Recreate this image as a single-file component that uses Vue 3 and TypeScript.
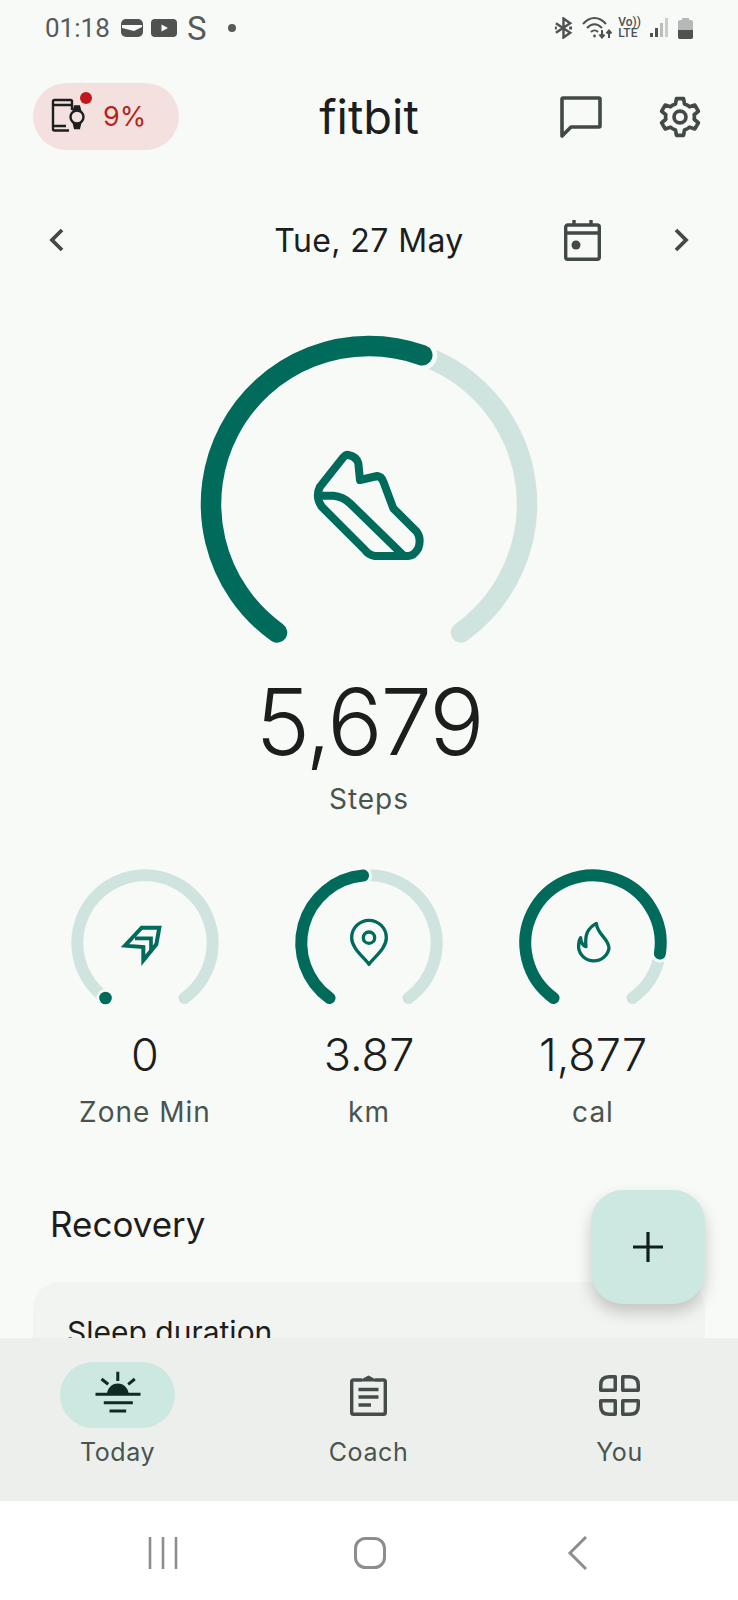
<script setup lang="ts">
const polar = (c: number, r: number, deg: number) => {
  const rad = (deg * Math.PI) / 180
  return `${(c + r * Math.sin(rad)).toFixed(2)} ${(c - r * Math.cos(rad)).toFixed(2)}`
}

const arc = (c: number, r: number, from: number, to: number) => {
  const large = to - from > 180 ? 1 : 0
  return `M${polar(c, r, from)} A${r} ${r} 0 ${large} 1 ${polar(c, r, to)}`
}

const START = -144.4
const END = 144.4

const stats = [
  { key: 'zone', value: '0', label: 'Zone Min', done: null },
  { key: 'km', value: '3.87', label: 'km', done: -5 },
  { key: 'cal', value: '1,877', label: 'cal', done: 99 },
]
</script>

<template>
  <div class="phone">
    <div class="status-bar">
      <span class="time">01:18</span>
      <svg width="22" height="18" viewBox="0 0 22 18">
        <rect width="22" height="18" rx="5" fill="#4e5250" />
        <path d="M1 6 H21 V8 L13 12 L1 9 Z" fill="#f8faf8" />
      </svg>
      <svg class="st-yt" width="26" height="18" viewBox="0 0 26 18">
        <rect width="26" height="18" rx="4" fill="#4e5250" />
        <path d="M10.500 5.500 L17 9 L10.500 12.500 Z" fill="#f8faf8" />
      </svg>
      <span class="st-s">S</span>
      <span class="st-dot"></span>
      <div class="st-right">
        <svg width="19" height="22" viewBox="0 0 20 22" fill="none" stroke="#4e5250" stroke-width="2.600">
          <path d="M2 6 L17 16 L10 21 V1 L17 6 L2 16" />
          <path d="M1 11 H3 M16 11 H19" stroke-width="3" />
        </svg>
        <svg class="st-wifi" width="30" height="22" viewBox="0 0 30 22" fill="none" stroke="#4e5250" stroke-width="2">
          <path d="M1 7 C8 -1 17 -1 24 7" />
          <path d="M5 11 C10 6 15 6 20 11" />
          <path d="M9 15 C11 13 14 13 16 15" />
          <circle cx="12.500" cy="19" r="1.400" fill="#4e5250" stroke="none" />
          <path d="M20 13 V20 M17.500 17.500 L20 20.500 L22.500 17.500 M27 21 V14 M24.500 16.500 L27 13.500 L29.500 16.500" />
        </svg>
        <div class="st-volte"><span>Vo))</span><span>LTE</span></div>
        <svg class="st-signal" width="18" height="20" viewBox="0 0 18 20">
          <rect x="0" y="15" width="3" height="4" fill="#4e5250" />
          <rect x="5" y="10" width="3" height="9" fill="#4e5250" />
          <rect x="10" y="5" width="3" height="14" fill="#b9bdbb" />
          <rect x="15" y="0" width="3" height="19" fill="#c9cdcb" />
        </svg>
        <svg class="st-battery" width="15" height="21" viewBox="0 0 15 21">
          <path d="M4 0 H11 V2 H13 Q15 2 15 4 V19 Q15 21 13 21 H2 Q0 21 0 19 V4 Q0 2 2 2 H4 Z" fill="#b4b8b6" />
          <path d="M0 12 H15 V19 Q15 21 13 21 H2 Q0 21 0 19 Z" fill="#4e5250" />
        </svg>
      </div>
    </div>

    <main class="main">
      <header class="header">
        <div class="battery-pill">
          <svg class="watch-icon" width="40" height="42" viewBox="0 0 40 42" fill="none" stroke="#1d1f1e" stroke-width="2.400">
            <path d="M21 14 V5.500 Q21 4 19.500 4 H3.500 Q2 4 2 5.500 V33 Q2 34.500 3.500 34.500 H18 M2 9 H21 M2 30 H15" />
            <circle cx="26" cy="21" r="6.500" />
            <path d="M23 14 L24 10.500 H28 L29 14 Z M23 28 L24 32 H28 L29 28 Z" fill="#1d1f1e" />
          </svg>
          <span class="pill-dot"></span>
          <span class="pill-text">9%</span>
        </div>
        <h1 class="logo">fitbit</h1>
        <div class="header-actions">
          <svg width="42" height="42" viewBox="0 0 42 42" fill="none" stroke="#424a47" stroke-width="3.600" stroke-linejoin="round">
            <path d="M2 40 V3 Q2 2 3 2 H39 Q40 2 40 3 V30 Q40 31 39 31 H11 Z" />
          </svg>
          <svg width="42" height="42" viewBox="0 0 24 24" fill="none" stroke="#424a47" stroke-width="2.100" stroke-linejoin="round">
            <path d="M10 1.500 H14 L14.600 4.600 Q16.300 5.200 17.500 6.200 L20.500 5.200 L22.500 8.700 L20.100 10.700 Q20.400 12 20.100 13.300 L22.500 15.300 L20.500 18.800 L17.500 17.800 Q16.300 18.800 14.600 19.400 L14 22.500 H10 L9.400 19.400 Q7.700 18.800 6.500 17.800 L3.500 18.800 L1.500 15.300 L3.900 13.300 Q3.600 12 3.900 10.700 L1.500 8.700 L3.500 5.200 L6.500 6.200 Q7.700 5.200 9.400 4.600 Z" />
            <circle cx="12" cy="12" r="3.400" />
          </svg>
        </div>
      </header>

      <div class="date-row">
        <svg width="15" height="24" viewBox="0 0 15 24" fill="none" stroke="#424a47" stroke-width="3.800">
          <path d="M13 2 L3 12 L13 22" />
        </svg>
        <span class="date">Tue, 27 May</span>
        <div class="date-actions">
          <svg width="37" height="41" viewBox="0 0 37 41" fill="none" stroke="#424a47" stroke-width="3.400">
            <rect x="1.700" y="5" width="33.600" height="34.300" rx="2" />
            <path d="M1.700 13 H35.300 M10 0 V5 M27 0 V5" />
            <circle cx="12" cy="25" r="4.500" fill="#424a47" stroke="none" />
          </svg>
          <svg width="15" height="24" viewBox="0 0 15 24" fill="none" stroke="#424a47" stroke-width="3.800">
            <path d="M2 2 L12 12 L2 22" />
          </svg>
        </div>
      </div>

      <svg class="steps-gauge" width="340" height="312" viewBox="0 0 340 312" fill="none">
        <path :d="arc(170, 158, 20, END)" class="track" stroke-width="20.500" />
        <path :d="arc(170, 158, START, 19.700)" class="halo" stroke-width="30" />
        <path :d="arc(170, 158, START, 19.700)" class="fill" stroke-width="20.500" />
        <g transform="translate(91 96) scale(.3333)" stroke="#006a5b" stroke-width="24" stroke-linejoin="round" fill="none">
          <path d="M175 75 Q200 80 205 100 L210 150 L262 138 Q275 140 280 155 L310 235 L380 305 Q395 325 385 355 Q372 378 355 378 H255 Q235 375 225 360 L95 230 Q75 200 90 170 L160 82 Q168 73 175 75 Z" />
          <path d="M85 197 H130 Q160 200 180 220 L340 376" />
        </g>
      </svg>

      <div class="steps-value">5,679</div>
      <div class="steps-label">Steps</div>

      <section class="stats">
        <div v-for="s in stats" :key="s.key" class="stat">
          <svg width="160" height="145" viewBox="0 0 160 145" fill="none">
            <path :d="arc(80, 67.7, s.done ?? START, END)" class="track" stroke-width="12" />
            <template v-if="s.done !== null">
              <path :d="arc(80, 67.7, START, s.done)" class="halo" stroke-width="18" />
              <path :d="arc(80, 67.7, START, s.done)" class="fill" stroke-width="12" />
            </template>
            <template v-else>
              <circle cx="40.500" cy="135" r="9" fill="#f8faf8" />
              <circle cx="40.500" cy="135" r="6.300" fill="#006a5b" />
            </template>
            <g v-if="s.key === 'zone'" transform="translate(50 52) scale(.3333)" stroke="#006a5b" fill="none">
              <path d="M30 92 L80 38 H133 L124 88 L85 136 V96 Z" stroke-width="12" />
              <path d="M60 70 H108 V112" stroke-width="11" />
            </g>
            <g v-if="s.key === 'km'" transform="translate(51 52) scale(.3333)" stroke="#006a5b" stroke-width="10" fill="none">
              <path d="M87 148 C70 125 35 100 35 68 A52 52 0 0 1 139 68 C139 100 104 125 87 148 Z" stroke-linejoin="round" />
              <circle cx="87" cy="68" r="17" />
            </g>
            <g v-if="s.key === 'cal'" transform="translate(51 52) scale(.3333)" stroke="#006a5b" stroke-width="10" fill="none" stroke-linejoin="round">
              <path d="M97 25 C70 40 62 60 66 95 C55 90 50 80 50 68 C42 80 44 92 44 100 A46 44 0 0 0 135 100 C135 70 100 60 97 25 Z" />
            </g>
          </svg>
          <div class="stat-value">{{ s.value }}</div>
          <div class="stat-label">{{ s.label }}</div>
        </div>
      </section>

      <h2 class="section-title">Recovery</h2>
      <div class="card">
        <div class="card-title">Sleep duration</div>
      </div>

      <button class="fab" type="button">
        <svg width="30" height="30" viewBox="0 0 30 30" stroke="#10201b" stroke-width="3.200">
          <path d="M15 0 V30 M0 15 H30" />
        </svg>
      </button>
    </main>

    <nav class="bottom-nav">
      <div class="nav-item">
        <div class="nav-icon active">
          <svg width="70" height="60" viewBox="-2.500 0 70 60" fill="none" stroke="#0f2a22" stroke-width="3">
            <path d="M21.500 29.300 A10.800 10.800 0 0 1 43.100 29.300 Z" fill="#0f2a22" stroke="none" />
            <path d="M10 29.300 H55 M18.300 37.700 H47.300 M24 46 H40.700" />
            <path d="M32.300 6.700 V16 M16 14 L22.700 19.300 M49.300 14 L42.700 19.300" />
          </svg>
        </div>
        <span class="nav-label">Today</span>
      </div>
      <div class="nav-item">
        <div class="nav-icon">
          <svg width="37" height="41" viewBox="0 0 37 41" fill="none" stroke="#444d49" stroke-width="3.400">
            <path d="M12 5 H3.500 Q1.700 5 1.700 6.800 V37.500 Q1.700 39.300 3.500 39.300 H33.500 Q35.300 39.300 35.300 37.500 V6.800 Q35.300 5 33.500 5 H25" />
            <path d="M12 6.500 H25 V4 L18.500 0.500 L12 4 Z" fill="#444d49" stroke="none" />
            <path d="M8.500 14.500 H28.500 M8.500 22 H28.500 M8.500 30 H21" />
          </svg>
        </div>
        <span class="nav-label">Coach</span>
      </div>
      <div class="nav-item">
        <div class="nav-icon">
          <svg width="41" height="41" viewBox="0 0 41 41" fill="none" stroke="#444d49" stroke-width="3.500" stroke-linejoin="round">
            <path d="M1.750 15.250 V10 Q1.750 1.750 10 1.750 H16.250 V15.250 Z" />
            <path d="M23.750 1.750 H31 Q39.250 1.750 39.250 10 V15.250 H23.750 Z" />
            <path d="M1.750 25.750 H16.250 V39.250 H10 Q1.750 39.250 1.750 31 Z" />
            <path d="M23.750 25.750 H39.250 V31 Q39.250 39.250 31 39.250 H23.750 Z" />
          </svg>
        </div>
        <span class="nav-label">You</span>
      </div>
    </nav>

    <div class="system-nav">
      <svg width="30" height="32" viewBox="0 0 30 32" stroke="#8c8e8d" stroke-width="2.600">
        <path d="M2 0 V32 M15 0 V32 M28 0 V32" />
      </svg>
      <svg width="32" height="32" viewBox="0 0 32 32" fill="none" stroke="#8c8e8d" stroke-width="3">
        <rect x="1.500" y="1.500" width="29" height="29" rx="10" />
      </svg>
      <svg width="25" height="34" viewBox="0 0 25 34" fill="none" stroke="#8c8e8d" stroke-width="3">
        <path d="M24 1 L8 17 L24 33" />
      </svg>
    </div>
  </div>
</template>

<style scoped>
.phone {
  width: 738px;
  height: 1600px;
  display: flex;
  flex-direction: column;
  overflow: hidden;
  background: #f8faf8;
  font-family: Inter, 'Noto Sans', sans-serif;
  color: #1c1e1d;
}

.status-bar {
  height: 56px;
  flex: none;
  display: flex;
  align-items: center;
  padding: 0 45px;
  color: #565a58;
}

.time {
  font-family: Roboto, sans-serif;
  font-size: 26px;
  font-weight: 400;
  width: 76px;
}

.st-yt {
  margin-left: 8px;
}

.st-s {
  font-family: Roboto, sans-serif;
  font-size: 33px;
  font-weight: 400;
  margin-left: 10px;
  line-height: 1;
}

.st-dot {
  width: 8px;
  height: 8px;
  border-radius: 50%;
  background: #565a58;
  margin-left: 21px;
}

.st-right {
  margin-left: auto;
  display: flex;
  align-items: center;
}

.st-wifi {
  margin-left: 9px;
}

.st-volte {
  margin-left: 6px;
  display: flex;
  flex-direction: column;
  font-family: Roboto, sans-serif;
  font-size: 12px;
  font-weight: 500;
  line-height: 11px;
  color: #4e5250;
}

.st-signal {
  margin-left: 9px;
}

.st-battery {
  margin-left: 10px;
}

.main {
  flex: 1;
  min-height: 0;
  position: relative;
  overflow: hidden;
  padding-top: 27px;
}

.header {
  height: 67px;
  padding: 0 37px 0 33px;
  display: grid;
  grid-template-columns: 1fr auto 1fr;
  align-items: center;
}

.battery-pill {
  position: relative;
  width: 146px;
  height: 67px;
  border-radius: 34px;
  background: #f4e1df;
  display: flex;
  align-items: center;
  padding-left: 18px;
  box-sizing: border-box;
}

.watch-icon {
  flex: none;
}

.pill-dot {
  position: absolute;
  left: 47px;
  top: 9px;
  width: 12px;
  height: 12px;
  border-radius: 50%;
  background: #c0181d;
}

.pill-text {
  margin-left: 12px;
  font-size: 27px;
  color: #b3261e;
}

.logo {
  margin: 0 0 0 4px;
  font-size: 47px;
  font-weight: 400;
  line-height: 67px;
  color: #1c1e1d;
}

.header-actions {
  display: flex;
  justify-content: flex-end;
  gap: 57px;
}

.date-row {
  margin-top: 68px;
  height: 44px;
  padding: 0 49px;
  display: grid;
  grid-template-columns: 1fr auto 1fr;
  align-items: center;
}

.date {
  font-size: 32px;
  font-weight: 400;
  letter-spacing: 0.4px;
}

.date-actions {
  display: flex;
  justify-content: flex-end;
  align-items: center;
  gap: 73px;
}

.steps-gauge {
  display: block;
  margin: 72px auto 0;
}

.track {
  stroke: #d0e4df;
  stroke-linecap: round;
}

.halo {
  stroke: #f8faf8;
  stroke-linecap: round;
}

.fill {
  stroke: #006a5b;
  stroke-linecap: round;
}

.steps-value {
  margin-top: 28px;
  text-align: center;
  font-size: 92px;
  font-weight: 300;
  letter-spacing: -2px;
  line-height: 96px;
}

.steps-label {
  margin-top: 11px;
  text-align: center;
  font-size: 28px;
  letter-spacing: 1px;
  line-height: 36px;
  color: #49544f;
}

.stats {
  margin-top: 46px;
  padding: 0 33px;
  display: grid;
  grid-template-columns: repeat(3, 224px);
}

.stat {
  display: flex;
  flex-direction: column;
  align-items: center;
}

.stat > svg {
  display: block;
}

.stat-value {
  margin-top: 19px;
  font-size: 45px;
  font-weight: 300;
  line-height: 56px;
}

.stat-label {
  margin-top: 11px;
  font-size: 28px;
  letter-spacing: 1px;
  line-height: 36px;
  color: #49544f;
}

.section-title {
  margin: 72px 0 0 50px;
  font-size: 35px;
  font-weight: 400;
  line-height: 44px;
}

.card {
  margin: 36px 33px 0;
  height: 300px;
  border-radius: 26px;
  background: #f2f4f2;
  padding: 33px 34px;
  box-sizing: border-box;
}

.card-title {
  font-size: 30px;
  line-height: 34px;
}

.fab {
  position: absolute;
  top: 1134px;
  right: 33px;
  width: 114px;
  height: 114px;
  border: none;
  border-radius: 32px;
  background: #cde8e1;
  box-shadow: 0 8px 16px rgba(0, 0, 0, 0.2);
  display: flex;
  align-items: center;
  justify-content: center;
}

.bottom-nav {
  flex: none;
  height: 163px;
  box-sizing: border-box;
  background: #edefed;
  padding: 24px 61px 0 60px;
  display: flex;
  justify-content: space-between;
}

.nav-item {
  width: 115px;
  display: flex;
  flex-direction: column;
  align-items: center;
}

.nav-icon {
  width: 115px;
  height: 66px;
  border-radius: 33px;
  display: flex;
  align-items: center;
  justify-content: center;
}

.nav-icon.active {
  background: #cde8e1;
}

.nav-label {
  margin-top: 9px;
  font-size: 25px;
  letter-spacing: 0.6px;
  line-height: 30px;
  color: #49544f;
}

.system-nav {
  flex: none;
  height: 99px;
  box-sizing: border-box;
  background: #fff;
  padding: 4px 151px 0 148px;
  display: flex;
  align-items: center;
  justify-content: space-between;
}
</style>
